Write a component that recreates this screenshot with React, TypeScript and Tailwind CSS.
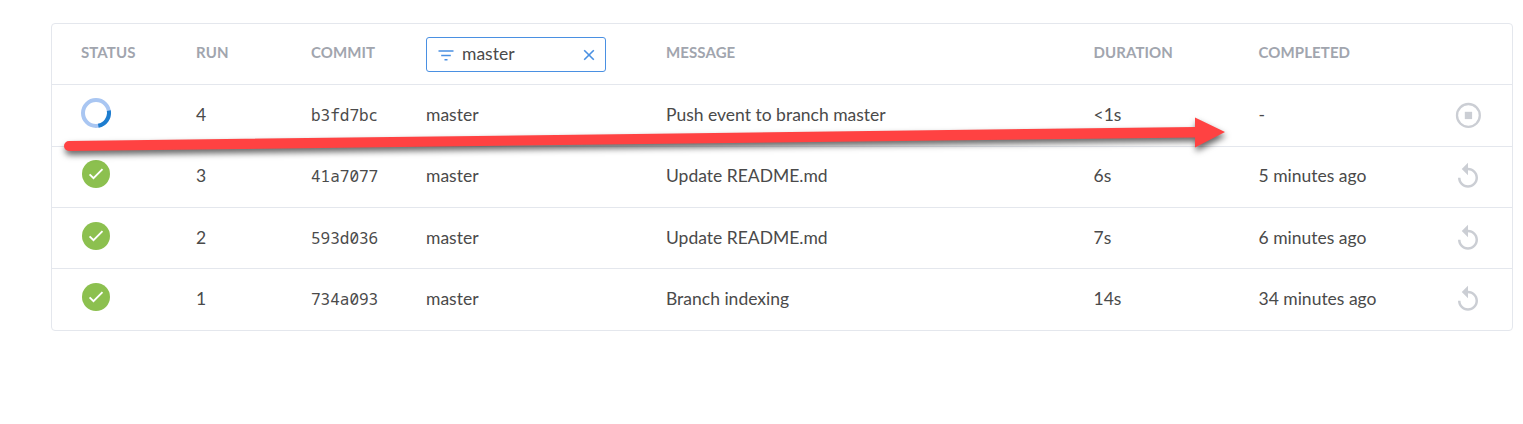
const columns =
  "grid grid-cols-[115px_115px_115px_240px_427.5px_165px_1fr_28px] pl-[29px] pr-[30px] border-[#e4e7ed]";

type Run = {
  id: number;
  commit: string;
  message: string;
  duration: string;
  completed: string;
  running?: boolean;
  height: string;
};

const runs: Run[] = [
  { id: 4, commit: "b3fd7bc", message: "Push event to branch master", duration: "<1s", completed: "-", running: true, height: "h-[62px] border-b pt-[13px]" },
  { id: 3, commit: "41a7077", message: "Update README.md", duration: "6s", completed: "5 minutes ago", height: "h-[61px] border-b pt-[12px]" },
  { id: 2, commit: "593d036", message: "Update README.md", duration: "7s", completed: "6 minutes ago", height: "h-[61px] border-b pt-[13px]" },
  { id: 1, commit: "734a093", message: "Branch indexing", duration: "14s", completed: "34 minutes ago", height: "h-[61px] pt-[13px]" },
];

function RunningIcon() {
  return (
    <svg width="30" height="30" viewBox="0 0 30 30" fill="none" strokeWidth="4">
      <circle cx="15" cy="15" r="13" stroke="#a9c6f2" />
      <path d="M27.8 12.7A13 13 0 0 1 17.3 27.8" stroke="#1d7dcf" />
    </svg>
  );
}

function SuccessIcon() {
  return (
    <svg width="30" height="30" viewBox="0 0 30 30">
      <circle cx="15" cy="15" r="14" fill="#8cc04f" />
      <path d="M8.6 15.3l3.9 3.9 9-9" fill="none" stroke="#fff" strokeWidth="1.9" />
    </svg>
  );
}

function StopIcon() {
  return (
    <svg width="28" height="28" viewBox="0 0 28 28">
      <circle cx="14.4" cy="14.4" r="11.4" fill="none" stroke="#cbced4" strokeWidth="2.3" />
      <path d="M10.8 10.8h7.3v7.3h-7.3z" fill="#cbced4" />
    </svg>
  );
}

function ReplayIcon() {
  return (
    <svg width="30" height="30" viewBox="0 0.4 24 24" fill="#cbced4" className="-ml-px">
      <path d="M12 5V1L7 6l5 5V7c3.31 0 6 2.69 6 6s-2.69 6-6 6-6-2.69-6-6H4c0 4.42 3.58 8 8 8s8-3.58 8-8-3.58-8-8-8z" />
    </svg>
  );
}

function BranchFilter() {
  return (
    <div className="mt-[13px] flex h-[35px] w-[180px] items-center rounded-[3px] border border-[#4a90e2] pl-[11px] pr-[10px] text-[17.5px] font-normal tracking-normal text-[#4a4a4a]">
      <svg width="16" height="12" viewBox="0 0 16 12" stroke="#4a90e2" strokeWidth="1.6">
        <path d="M.5 2h15M3.2 6.5h9.6M6.5 10.7h3" />
      </svg>
      <span className="-mt-px ml-2 flex-1 leading-6">master</span>
      <svg width="12" height="12" viewBox="0 0 12 12" stroke="#4a90e2" strokeWidth="1.6">
        <path d="M1.2 1.2l9.6 9.6M10.8 1.2l-9.6 9.6" />
      </svg>
    </div>
  );
}

function Arrow() {
  return (
    <svg
      className="pointer-events-none absolute left-0 top-0"
      width="1300"
      height="200"
      viewBox="0 0 1300 200"
      fill="#ff4242"
    >
      <g className="drop-shadow-[1px_4px_3px_rgba(0,0,0,0.6)]">
        <path d="M69 141L1195 127V117.5L1225 132L1195 147.5V137.5L69 151A5 5 0 0 1 69 141Z" />
      </g>
    </svg>
  );
}

export default function App() {
  return (
    <main className="relative h-[424px] w-[1523px] overflow-hidden bg-white pl-[51px] pt-[23px] font-['Lato',sans-serif] text-[17.5px] text-[#4a4a4a]">
      <section className="w-[1462px] rounded-[4px] border border-[#e4e7ed]">
        <header className={`${columns} h-[61px] border-b text-[15px] font-bold tracking-[0.1px] text-[#a1a5ae]`}>
          <span className="mt-[17px] leading-[22px]">STATUS</span>
          <span className="mt-[17px] leading-[22px]">RUN</span>
          <span className="mt-[17px] leading-[22px]">COMMIT</span>
          <BranchFilter />
          <span className="mt-[17px] leading-[22px]">MESSAGE</span>
          <span className="mt-[17px] leading-[22px]">DURATION</span>
          <span className="mt-[17px] leading-[22px]">COMPLETED</span>
        </header>
        {runs.map((run) => (
          <div key={run.id} className={`${columns} ${run.height} leading-[34px]`}>
            <span>{run.running ? <RunningIcon /> : <SuccessIcon />}</span>
            <span>{run.id}</span>
            <span className="font-['Noto_Sans_Mono','DejaVu_Sans_Mono',monospace] text-[16px] leading-[34px]">{run.commit}</span>
            <span>master</span>
            <span>{run.message}</span>
            <span>{run.duration}</span>
            <span>{run.completed}</span>
            <span className="pt-[3px]">{run.running ? <StopIcon /> : <ReplayIcon />}</span>
          </div>
        ))}
      </section>
      <Arrow />
    </main>
  );
}
